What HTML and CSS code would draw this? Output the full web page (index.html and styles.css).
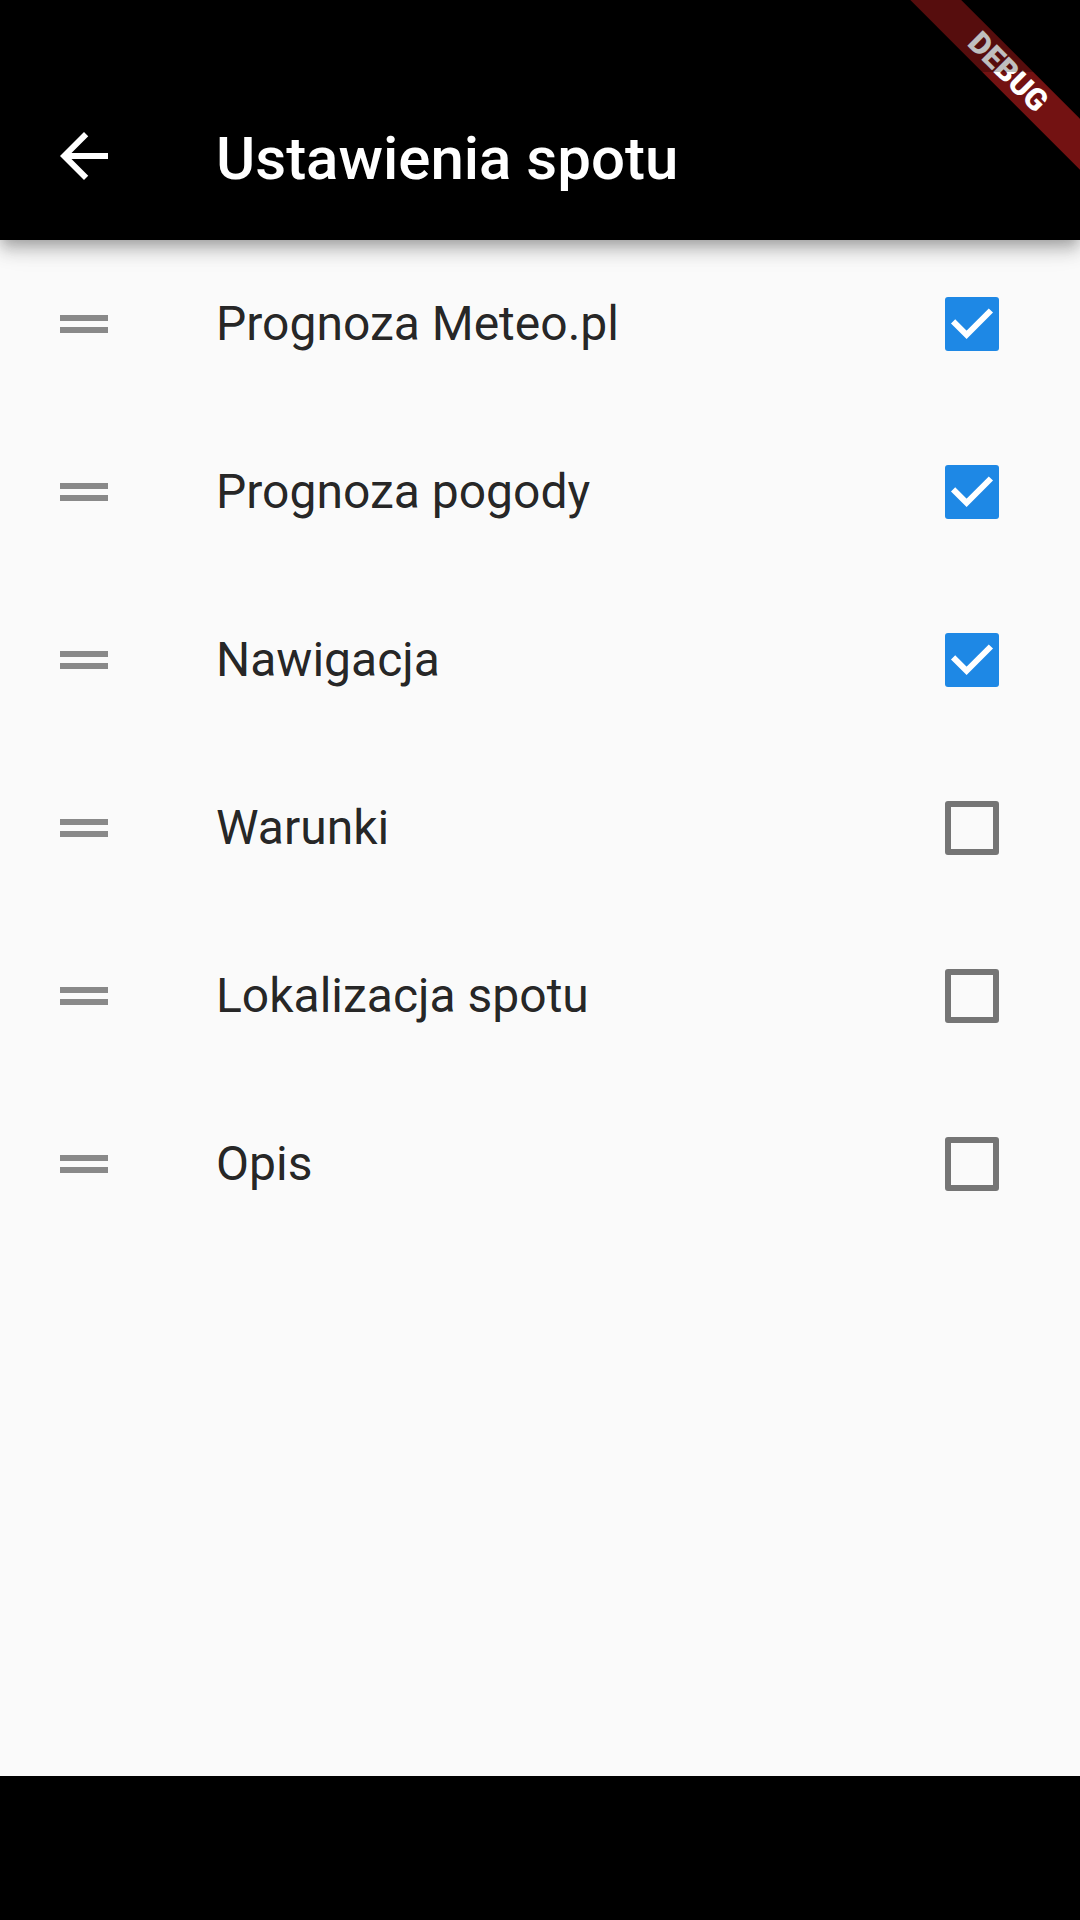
FILE: index.html
```html
<!DOCTYPE html>
<html lang="pl">
<head>
<meta charset="utf-8">
<title>Ustawienia spotu</title>
<link rel="stylesheet" href="styles.css">
</head>
<body>
<div class="screen">
  <header class="appbar">
    <div class="statusbar"></div>
    <div class="toolbar">
      <div class="lead-icon">
        <svg viewBox="0 0 24 24" width="72" height="72"><path fill="#fff" d="M20 11H7.830l5.590-5.590L12 4l-8 8 8 8 1.410-1.410L7.830 13H20v-2z"/></svg>
      </div>
      <h1 class="title">Ustawienia spotu</h1>
    </div>
  </header>
  <main class="list">
    <div class="row">
      <div class="handle"><svg viewBox="0 0 24 24" width="72" height="72"><path d="M20 9H4v2h16V9zM4 15h16v-2H4v2z"/></svg></div>
      <div class="label">Prognoza Meteo.pl</div>
      <div class="check-wrap"><div class="box checked"><svg viewBox="0 0 18 18" width="54" height="54"><path d="M2.7 8.1L7.2 12.6L15.3 4.5"/></svg></div></div>
    </div>
    <div class="row">
      <div class="handle"><svg viewBox="0 0 24 24" width="72" height="72"><path d="M20 9H4v2h16V9zM4 15h16v-2H4v2z"/></svg></div>
      <div class="label">Prognoza pogody</div>
      <div class="check-wrap"><div class="box checked"><svg viewBox="0 0 18 18" width="54" height="54"><path d="M2.7 8.1L7.2 12.6L15.3 4.5"/></svg></div></div>
    </div>
    <div class="row">
      <div class="handle"><svg viewBox="0 0 24 24" width="72" height="72"><path d="M20 9H4v2h16V9zM4 15h16v-2H4v2z"/></svg></div>
      <div class="label">Nawigacja</div>
      <div class="check-wrap"><div class="box checked"><svg viewBox="0 0 18 18" width="54" height="54"><path d="M2.7 8.1L7.2 12.6L15.3 4.5"/></svg></div></div>
    </div>
    <div class="row">
      <div class="handle"><svg viewBox="0 0 24 24" width="72" height="72"><path d="M20 9H4v2h16V9zM4 15h16v-2H4v2z"/></svg></div>
      <div class="label">Warunki</div>
      <div class="check-wrap"><div class="box"></div></div>
    </div>
    <div class="row">
      <div class="handle"><svg viewBox="0 0 24 24" width="72" height="72"><path d="M20 9H4v2h16V9zM4 15h16v-2H4v2z"/></svg></div>
      <div class="label">Lokalizacja spotu</div>
      <div class="check-wrap"><div class="box"></div></div>
    </div>
    <div class="row">
      <div class="handle"><svg viewBox="0 0 24 24" width="72" height="72"><path d="M20 9H4v2h16V9zM4 15h16v-2H4v2z"/></svg></div>
      <div class="label">Opis</div>
      <div class="check-wrap"><div class="box"></div></div>
    </div>
  </main>
  <footer class="navbar"></footer>
  <div class="banner-anchor"><div class="banner">DEBUG</div></div>
  <div class="status-scrim"></div>
</div>
</body>
</html>
```
FILE: styles.css
```css
html, body {
  margin: 0;
  padding: 0;
  width: 1080px;
  height: 1920px;
  overflow: hidden;
  background: #fafafa;
}
.screen {
  position: relative;
  width: 1080px;
  height: 1920px;
  display: flex;
  flex-direction: column;
  overflow: hidden;
  font-family: Roboto, "Noto Sans", sans-serif;
}
.appbar {
  position: relative;
  z-index: 2;
  background: #000;
  height: 240px;
  flex: none;
  display: flex;
  flex-direction: column;
  box-shadow: 0 6px 12px -3px rgba(0,0,0,0.2), 0 12px 15px 0 rgba(0,0,0,0.14), 0 3px 30px 0 rgba(0,0,0,0.12);
}
.statusbar {
  height: 72px;
  flex: none;
}
.toolbar {
  height: 168px;
  display: flex;
  align-items: center;
}
.lead-icon {
  width: 72px;
  height: 72px;
  margin-left: 48px;
  display: flex;
}
.title {
  margin: 6px 0 0 96px;
  color: #fff;
  font-size: 60px;
  font-weight: 500;
  letter-spacing: 0;
  line-height: 1;
}
.list {
  flex: 1;
  background: #fafafa;
  display: flex;
  flex-direction: column;
}
.row {
  height: 168px;
  display: flex;
  align-items: center;
  padding: 0 48px;
}
.handle {
  width: 72px;
  height: 72px;
  display: flex;
  flex: none;
}
.handle path {
  fill: rgba(0,0,0,0.45);
}
.label {
  flex: 1;
  margin-left: 96px;
  font-size: 48px;
  color: rgba(0,0,0,0.87);
  letter-spacing: 0;
  line-height: 1.2;
}
.check-wrap {
  width: 120px;
  height: 120px;
  display: flex;
  align-items: center;
  justify-content: center;
  flex: none;
}
.box {
  width: 54px;
  height: 54px;
  box-sizing: border-box;
  border: 6px solid #757575;
  border-radius: 3px;
}
.box.checked {
  border: none;
  background: #1e88e5;
}
.box svg {
  display: block;
}
.box path {
  fill: none;
  stroke: #fff;
  stroke-width: 2;
}
.navbar {
  height: 144px;
  flex: none;
  background: #000;
}
.banner-anchor {
  position: absolute;
  top: 0;
  left: 1080px;
  width: 0;
  height: 0;
  transform: rotate(45deg);
  transform-origin: 0 0;
  z-index: 5;
}
.banner {
  position: absolute;
  left: -120px;
  top: 84px;
  width: 240px;
  height: 36px;
  background: rgba(183,28,28,0.627);
  color: #fff;
  font-family: Roboto, "Noto Sans", sans-serif;
  font-weight: 900;
  font-size: 30.6px;
  line-height: 36px;
  text-align: center;
}
.status-scrim {
  position: absolute;
  top: 0;
  left: 0;
  width: 1080px;
  height: 72px;
  background: rgba(0,0,0,0.25);
  z-index: 6;
}
```
